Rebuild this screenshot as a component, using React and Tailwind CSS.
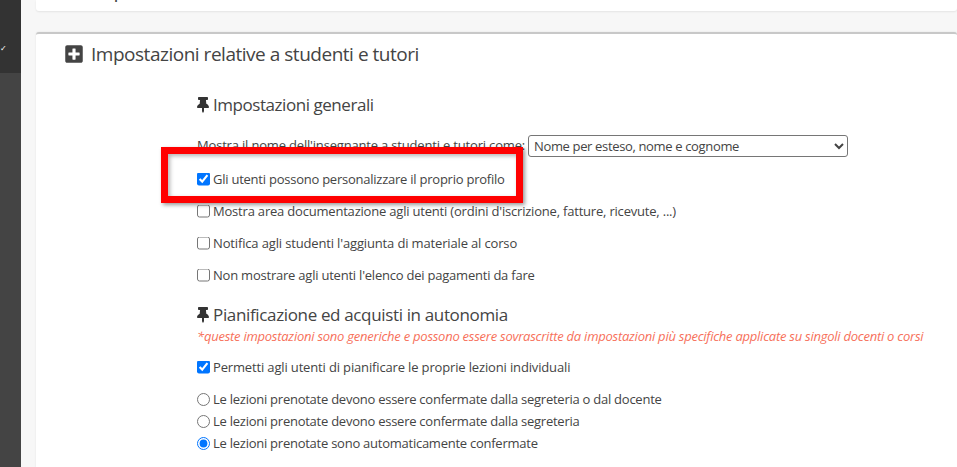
import React from "react";
import { FaPlusSquare, FaThumbtack } from "react-icons/fa";

const font = { fontFamily: '"Open Sans", "Noto Sans", sans-serif' };

function Check({ label, checked, className = "" }) {
  return (
    <label className={`flex items-center h-[22px] text-[13px] text-[#444] ${className}`}>
      <input type="checkbox" defaultChecked={checked} className="m-0 mr-[3px] w-[13px] h-[13px] -translate-y-[1.5px]" />
      <span>{label}</span>
    </label>
  );
}

function Radio({ label, checked, className = "" }) {
  return (
    <label className={`flex items-center h-[22px] text-[13px] tracking-[-0.25px] text-[#444] ${className}`}>
      <input type="radio" name="conf" defaultChecked={checked} className="m-0 mr-[3px] w-[13px] h-[13px] -translate-y-[1px]" />
      <span>{label}</span>
    </label>
  );
}

function SubHeading({ children, className = "" }) {
  return (
    <h3 className={`flex items-center h-[24px] text-[17px] text-[#444] ${className}`}>
      <FaThumbtack className="w-[12px] h-[16px] mr-[4px] text-[#333] shrink-0" />
      <span>{children}</span>
    </h3>
  );
}

export default function App() {
  return (
    <div className="relative h-[467px] w-[957px] overflow-hidden bg-[#f7f7f7] flex" style={font}>
      <aside className="w-[21px] shrink-0 flex flex-col bg-[#444]">
        <div className="h-[73px] bg-[#333] relative">
          <span className="absolute left-0 top-[44px] text-[8px] leading-none text-white">✓</span>
        </div>
      </aside>
      <main className="flex-1 ml-[15px] flex flex-col">
        <section className="h-[11px] bg-white rounded-b-[3px] shadow-[0_1px_2px_rgba(0,0,0,0.08)] overflow-hidden pl-[55px]">
          <div className="-mt-[24px] text-[20px] leading-[28px] tracking-[-0.8px] text-[#444]">Impostazioni</div>
        </section>
        <section className="mt-[21px] flex-1 bg-white border-t-2 border-[#c8c8c8] rounded-t-[3px] shadow-[0_0_2px_rgba(0,0,0,0.1)]">
          <div className="pl-[29px] flex items-center h-[40px] text-[#444]">
            <FaPlusSquare className="w-[18px] h-[20px] text-[#444] mr-[8px]" />
            <h2 className="text-[19px] tracking-[-0.48px]">Impostazioni relative a studenti e tutori</h2>
          </div>
          <div className="pl-[161px] mt-[19px]">
            <SubHeading className="tracking-[-0.45px]">Impostazioni generali</SubHeading>
            <div className="mt-[18px] flex items-center h-[22px] text-[13px] text-[#444]">
              <span className="w-[331px] shrink-0 tracking-[-0.18px] whitespace-nowrap">Mostra il nome dell'insegnante a studenti e tutori come:</span>
              <select className="w-[320px] h-[22px] border border-[#767676] rounded-[3px] bg-white text-[13px] pl-[1px] tracking-[-0.35px] text-[#444]" defaultValue="a">
                <option value="a">Nome per esteso, nome e cognome</option>
              </select>
            </div>
            <Check className="mt-[12px] tracking-[-0.24px]" checked label="Gli utenti possono personalizzare il proprio profilo" />
            <Check className="mt-[10px] tracking-[-0.2px]" label="Mostra area documentazione agli utenti (ordini d'iscrizione, fatture, ricevute, ...)" />
            <Check className="mt-[10px] tracking-[-0.15px]" label="Notifica agli studenti l'aggiunta di materiale al corso" />
            <Check className="mt-[10px] tracking-[-0.22px]" label="Non mostrare agli utenti l'elenco dei pagamenti da fare" />
            <div className="mt-[16px]">
              <SubHeading className="tracking-[-0.35px]">Pianificazione ed acquisti in autonomia</SubHeading>
            </div>
            <p className="-mt-[1px] h-[20px] leading-[20px] text-[13px] italic tracking-[-0.245px] text-[#f7705a] whitespace-nowrap">
              *queste impostazioni sono generiche e possono essere sovrascritte da impostazioni più specifiche applicate su singoli docenti o corsi
            </p>
            <Check className="mt-[11px] tracking-[-0.15px]" checked label="Permetti agli utenti di pianificare le proprie lezioni individuali" />
            <Radio className="mt-[10px]" label="Le lezioni prenotate devono essere confermate dalla segreteria o dal docente" />
            <Radio label="Le lezioni prenotate devono essere confermate dalla segreteria" />
            <Radio checked label="Le lezioni prenotate sono automaticamente confermate" />
          </div>
        </section>
      </main>
      <div className="absolute left-[161px] top-[147px] w-[362px] h-[56px] border-[7px] border-[#ff0000] shadow-[2px_2px_4px_rgba(0,0,0,0.4),inset_2px_2px_4px_rgba(0,0,0,0.3)]" />
    </div>
  );
}
